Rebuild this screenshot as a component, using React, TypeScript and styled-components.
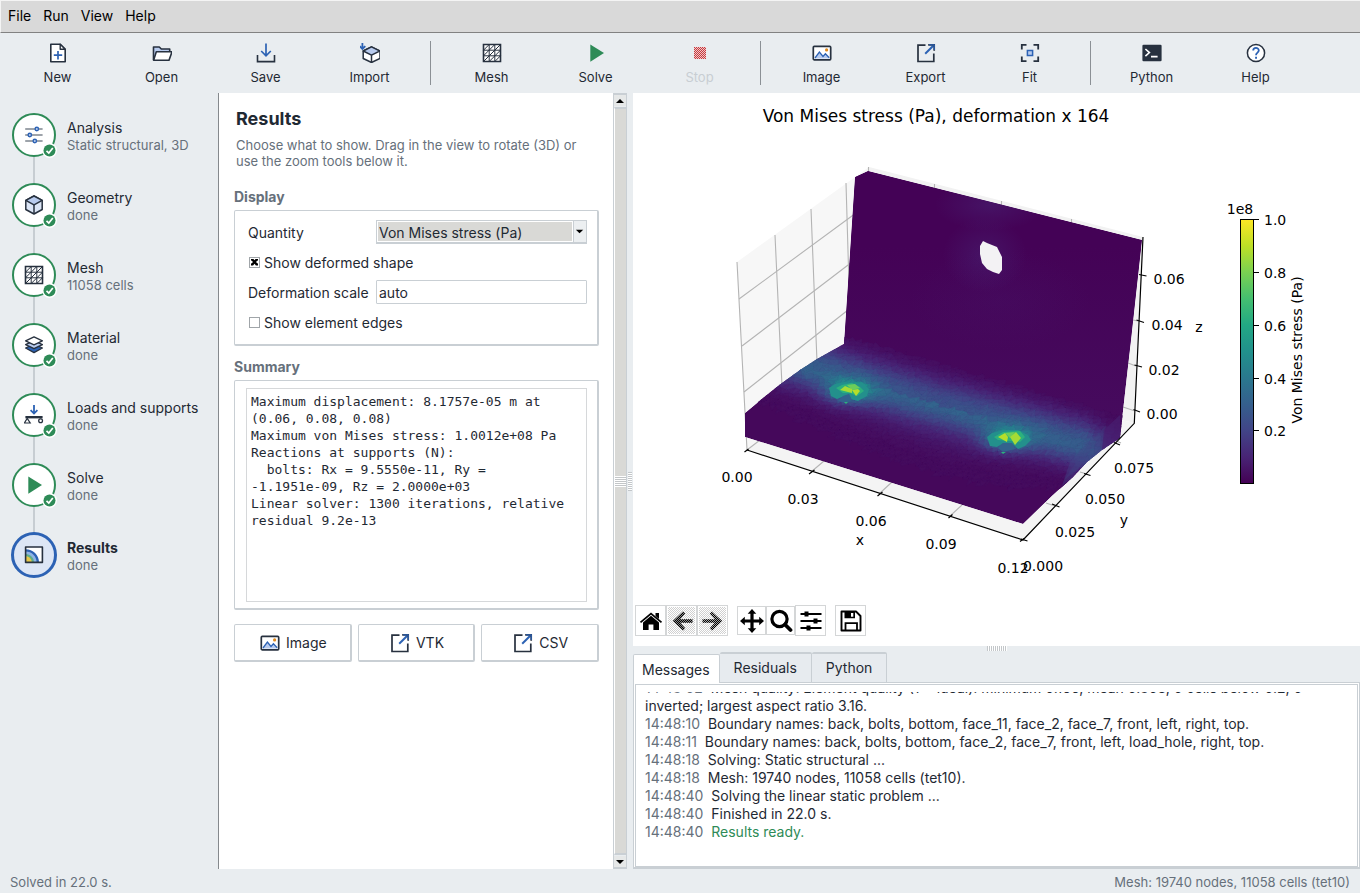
import React from 'react';
import styled, { createGlobalStyle } from 'styled-components';

const ink = '#1f2933';
const navy = '#27313f';
const muted = '#66707b';
const blue = '#2c62b4';
const paleBlue = '#b8cbee';
const green = '#2e8b57';
const line = '#c9cfd4';
const canvas = '#e9edf0';

const GlobalStyle = createGlobalStyle`
  *, *::before, *::after { box-sizing: border-box; }
  body {
    margin: 0;
    background: ${canvas};
    color: ${ink};
    font-family: Inter, "Liberation Sans", sans-serif;
    font-size: 14px;
  }
  button, input, select, textarea { font: inherit; color: inherit; margin: 0; }
`;

const Page = styled.div`
  display: flex;
  flex-direction: column;
  min-height: 100vh;
`;

/* ---------- menu bar and tool bar ---------- */

const MenuBar = styled.nav`
  display: flex;
  gap: 12px;
  height: 33px;
  padding: 0 7px;
  background: #d9d9d9;
  border-top: 1px solid #f4f4f4;
  border-left: 1px solid #f4f4f4;
  border-bottom: 1px solid #828282;
`;

const MenuItem = styled.button`
  border: 0;
  padding: 0 0 2px;
  background: none;
  color: #000;
  line-height: 28px;
`;

const ToolBar = styled.div`
  display: flex;
  height: 60px;
  padding: 0 6px;
`;

const ToolButton = styled.button`
  display: flex;
  flex-direction: column;
  align-items: center;
  gap: 5px;
  width: 104px;
  padding: 10px 1px 0 0;
  border: 0;
  background: none;
  font-size: 13px;
  line-height: 18px;
  &:disabled { color: #c8ced3; }
`;

const ToolDivider = styled.div`
  width: 1px;
  height: 44px;
  margin: 8px 9px 0 8px;
  background: #8b9095;
`;

const IconSvg = styled.svg`
  display: block;
  flex: none;
  width: 20px;
  height: 20px;
  fill: none;
`;

/* ---------- work area ---------- */

const Work = styled.main`
  display: flex;
  flex: 1;
  min-height: 0;
`;

const Sidebar = styled.ol`
  flex: none;
  width: 219px;
  margin: 0;
  padding: 7px 0 0 12px;
  border-right: 1px solid #85898d;
  list-style: none;
`;

const Step = styled.li`
  display: flex;
  gap: 11px;
  height: 70px;
`;

const Marker = styled.div`
  display: flex;
  flex-direction: column;
  align-items: center;
  width: 44px;
`;

const Link = styled.div<{ $hidden?: boolean }>`
  flex: 1;
  width: 2px;
  background: ${(p) => (p.$hidden ? 'transparent' : '#c7cdd2')};
`;

const Disc = styled.button<{ $active?: boolean }>`
  position: relative;
  display: flex;
  flex: none;
  align-items: center;
  justify-content: center;
  width: ${(p) => (p.$active ? 46 : 44)}px;
  height: ${(p) => (p.$active ? 46 : 44)}px;
  padding: 0;
  border: ${(p) => (p.$active ? `3px solid ${blue}` : `2px solid ${green}`)};
  border-radius: 50%;
  background: ${(p) => (p.$active ? '#dde6f5' : '#fff')};
`;

const Badge = styled.svg`
  position: absolute;
  right: -3px;
  bottom: -3px;
  width: 15px;
  height: 15px;
`;

const StepText = styled.div`
  display: flex;
  flex-direction: column;
  justify-content: center;
  padding-top: 3px;
`;

const StepTitle = styled.span<{ $active?: boolean }>`
  line-height: 18px;
  font-weight: ${(p) => (p.$active ? 700 : 400)};
`;

const StepNote = styled.span`
  color: ${muted};
  font-size: 13px;
  line-height: 17px;
`;

/* ---------- results form ---------- */

const Panel = styled.section`
  flex: none;
  display: flex;
  flex-direction: column;
  width: 394px;
  padding: 15px 14px 15px 15px;
  background: #fff;
`;

const PanelTitle = styled.h1`
  margin: 0 2px;
  font-size: 18px;
  font-weight: 700;
  line-height: 22px;
`;

const PanelHint = styled.p`
  margin: 7px 14px 0 2px;
  color: ${muted};
  font-size: 13px;
  line-height: 16px;
`;

const GroupTitle = styled.h2<{ $top: number }>`
  margin: ${(p) => p.$top}px 0 4px;
  color: ${muted};
  font-size: 14px;
  font-weight: 700;
  line-height: 18px;
`;

const Frame = styled.div`
  border: 1px solid ${line};
  border-right-width: 2px;
  border-bottom-width: 2px;
  border-radius: 2px;
`;

const Fields = styled(Frame)`
  padding: 6px 10px 7px 13px;
`;

const FieldRow = styled.div`
  display: grid;
  grid-template-columns: 128px 1fr;
  align-items: center;
  height: 30px;
`;

const CheckRow = styled.label`
  display: flex;
  align-items: center;
  gap: 4px;
  height: 30px;
  padding-left: 1px;
`;

const SelectBox = styled.div`
  position: relative;
  display: flex;
  height: 24px;
  border: 1px solid ${line};
  border-bottom-width: 2px;
`;

const Select = styled.select`
  appearance: none;
  flex: 1;
  padding: 2px 15px 0 1px;
  border: 1px solid #fff;
  border-radius: 0;
  background: linear-gradient(90deg, #d9d9d6 calc(100% - 13px), #fff calc(100% - 13px));
`;

const SelectArrow = styled.svg`
  position: absolute;
  right: 0;
  top: 0;
  width: 13px;
  height: 21px;
  background: #eceff1;
  border-left: 1px solid ${line};
  pointer-events: none;
`;

const TextInput = styled.input`
  width: 100%;
  height: 24px;
  padding: 0 2px;
  border: 1px solid ${line};
  border-radius: 1px;
  background: #fff;
`;

const Check = styled.input`
  appearance: none;
  width: 11px;
  height: 11px;
  border: 1px solid #a0a5a9;
  background: #fff;
  &:checked::before {
    content: '';
    display: block;
    width: 7px;
    height: 7px;
    margin: 1px;
    background: #000;
    clip-path: polygon(0 0, 30% 0, 50% 25%, 70% 0, 100% 0, 100% 25%, 70% 50%, 100% 75%, 100% 100%, 70% 100%, 50% 75%, 30% 100%, 0 100%, 0 75%, 30% 50%, 0 25%);
  }
`;

const SummaryFrame = styled(Frame)`
  height: 230px;
  padding: 7px 10px 6px 11px;
`;

const SummaryText = styled.textarea`
  display: block;
  width: 100%;
  height: 214px;
  padding: 4px;
  border: 1px solid #d6d8da;
  background: #fff;
  font-family: "DejaVu Sans Mono", monospace;
  font-size: 13px;
  line-height: 17px;
  resize: none;
  overflow: hidden;
`;

const Exports = styled.div`
  display: grid;
  grid-template-columns: 1fr 1fr 1fr;
  gap: 6px;
  margin-top: 14px;
`;

const ExportButton = styled.button`
  display: flex;
  align-items: center;
  justify-content: center;
  gap: 6px;
  height: 38px;
  padding: 0 0 0 2px;
  border: 1px solid ${line};
  border-right-width: 2px;
  border-bottom-width: 2px;
  border-radius: 2px;
  background: #fff;
`;

/* ---------- scroll bar and sashes ---------- */

const ScrollBar = styled.div`
  flex: none;
  display: flex;
  flex-direction: column;
  width: 14px;
  border: 1px solid ${line};
  border-top-width: 2px;
  border-bottom-width: 2px;
`;

const ScrollButton = styled.button`
  display: flex;
  align-items: center;
  justify-content: center;
  height: 11px;
  padding: 0;
  border: 0;
  background: #e6e8e8;
`;

const Thumb = styled.div`
  flex: 1;
  display: flex;
  align-items: center;
  margin: 1px 0;
  border-top: 2px solid ${line};
  border-bottom: 2px solid ${line};
  border-left: 1px solid #fff;
  background: #d9d9d6;
`;

const ThumbGrip = styled.div`
  width: 100%;
  height: 11px;
  background: repeating-linear-gradient(#fff 0 1px, #c3c6c8 1px 2px);
`;

const SashV = styled.div`
  flex: none;
  display: flex;
  align-items: center;
  justify-content: center;
  width: 6px;
`;

const SashGripV = styled.div`
  width: 4px;
  height: 19px;
  background: repeating-linear-gradient(#c3c7ca 0 1px, #fff 1px 2px);
`;

const SashH = styled.div`
  display: flex;
  justify-content: center;
  height: 6px;
`;

const SashGripH = styled.div`
  width: 20px;
  height: 5px;
  background: repeating-linear-gradient(90deg, #c3c7ca 0 1px, #fff 1px 2px);
`;

/* ---------- plot ---------- */

const RightPane = styled.section`
  flex: 1;
  min-width: 0;
  display: flex;
  flex-direction: column;
`;

const Plot = styled.svg`
  flex: 1 1 0;
  width: 100%;
  min-height: 320px;
  background: #fff;
  font-family: "DejaVu Sans", sans-serif;
  font-size: 14px;
`;

const PlotBar = styled.div`
  display: flex;
  align-items: center;
  height: 49px;
  padding: 0 2px 2px;
  background: #fff;
`;

const PlotButton = styled.button<{ $small?: boolean }>`
  display: flex;
  align-items: center;
  justify-content: center;
  width: ${(p) => (p.$small ? 29 : 31)}px;
  height: ${(p) => (p.$small ? 29 : 31)}px;
  padding: 1px;
  border: 1px solid #d4d6d7;
  background: #fff;
  &:disabled {
    background: repeating-conic-gradient(#d0d0d0 0 25%, #fff 0 50%) 0 0 / 2px 2px content-box, #fff;
  }
`;

const PlotGap = styled.div`
  width: 9px;
`;

const PlotIcon = styled.svg`
  display: block;
  flex: none;
  width: 24px;
  height: 24px;
`;

/* ---------- message notebook ---------- */

const Tabs = styled.div`
  display: flex;
  align-items: flex-end;
  height: 31px;
  margin-bottom: -1px;
  padding-right: 1px;
  z-index: 1;
`;

const Tab = styled.button<{ $on?: boolean }>`
  height: ${(p) => (p.$on ? 29 : 30)}px;
  margin-bottom: ${(p) => (p.$on ? 0 : 1)}px;
  padding: ${(p) => (p.$on ? '0 9px 0 8px' : '0 14px 1px')};
  border: 1px solid ${line};
  border-top-width: ${(p) => (p.$on ? 1 : 2)}px;
  border-bottom: 0;
  border-left-width: ${(p) => (p.$on ? 1 : 0)}px;
  border-radius: 2px 2px 0 0;
  background: ${(p) => (p.$on ? '#fff' : '#e7ebef')};
`;

const TabBody = styled.div`
  height: 187px;
  padding: 1px 1px 0;
  border: 1px solid ${line};
  border-bottom-width: 2px;
  background: #fff;
`;

const LogFrame = styled.div`
  height: 183px;
  padding: 7px 9px;
  border: 1px solid ${line};
`;

const Log = styled.div`
  display: flex;
  flex-direction: column;
  justify-content: flex-end;
  height: 100%;
  padding-bottom: 18px;
  overflow: hidden;
`;

const LogLine = styled.p<{ $ok?: boolean }>`
  margin: 0;
  line-height: 18px;
  white-space: pre-wrap;
  color: ${(p) => (p.$ok ? green : ink)};
`;

const LogTime = styled.span`
  color: ${muted};
`;

const StatusBar = styled.footer`
  display: flex;
  justify-content: space-between;
  height: 24px;
  padding: 0 10px;
  color: ${muted};
  font-size: 13px;
  line-height: 26px;
`;

/* ---------- icons ---------- */

const Icon = ({ children }: { children: React.ReactNode }) => (
  <IconSvg viewBox="0 0 20 20" aria-hidden="true">{children}</IconSvg>
);

const icons: Record<string, React.ReactNode> = {
  file: (
    <Icon>
      <path d="M2.8 1.3h9.4l5 5v12.5H2.8z" fill="#fff" stroke={navy} strokeWidth="1.6" strokeLinejoin="round" />
      <path d="M12.2 1.3v5h5z" fill="#fff" stroke={navy} strokeWidth="1.4" strokeLinejoin="round" />
      <path d="M10 8v8.4M5.8 12.2h8.4" stroke={blue} strokeWidth="1.7" />
    </Icon>
  ),
  folder: (
    <Icon>
      <path d="M1.5 17V4h5.8l2 2h8.4v3" fill={paleBlue} stroke={navy} strokeWidth="1.6" strokeLinejoin="round" />
      <path d="M4.3 8.8H20l-3 8.4H1.6z" fill="#fff" stroke={navy} strokeWidth="1.6" strokeLinejoin="round" />
    </Icon>
  ),
  save: (
    <Icon>
      <path d="M10 .5v12.2M5.2 8l4.8 4.8L14.8 8" stroke={blue} strokeWidth="1.7" />
      <path d="M1.5 12v6.6h17V12" stroke={navy} strokeWidth="1.6" />
    </Icon>
  ),
  import: (
    <Icon>
      <path d="M11.5 3.8 20 8v7.5l-8.5 4-8.3-4V8z" fill="#fff" stroke={navy} strokeWidth="1.5" strokeLinejoin="round" />
      <path d="M11.5 3.8 20 8l-8.5 4.2L3.2 8z" fill={paleBlue} stroke={navy} strokeWidth="1.5" strokeLinejoin="round" />
      <path d="M11.5 12.2v7" stroke={navy} strokeWidth="1.5" />
      <path d="M2.4-.2v6M-.4 3.2 2.4 6l2.9-2.8" stroke={blue} strokeWidth="1.8" />
    </Icon>
  ),
  mesh: (
    <Icon>
      <path d="M1.5 1.5h17v17h-17z" fill="#fff" stroke={navy} strokeWidth="1.6" />
      <path d="M7.2 1.5v17M12.8 1.5v17M1.5 7.2h17M1.5 12.8h17M1.5 7.2l5.7-5.7M1.5 12.8 12.8 1.5M1.5 18.5l17-17M7.2 18.5 18.5 7.2M12.8 18.5l5.7-5.7" stroke={navy} strokeWidth="1" />
    </Icon>
  ),
  play: <Icon><path d="M4.3 1.5 18 10 4.3 18.7z" fill={green} /></Icon>,
  stop: (
    <Icon>
      <path d="M4 4h12v12H4z" fill="#efc9ca" />
      {Array.from({ length: 12 }, (_, r) => (
        <path key={r} d={`M${4 + (r % 2)} ${4.5 + r}H16`} stroke="#c8393e" strokeWidth="1" strokeDasharray="1 1" shapeRendering="crispEdges" />
      ))}
    </Icon>
  ),
  image: (
    <Icon>
      <rect x="1.3" y="3.4" width="17.4" height="13.4" rx="1" fill="#fff" stroke={navy} strokeWidth="1.7" />
      <path d="M3 15.6 7.4 9.4l3.4 4.2 2.6-2.8 3.8 4.8z" fill={paleBlue} />
      <path d="M3 15 7.4 9l3.6 4.4 2.4-2.6 3.8 4" stroke={blue} strokeWidth="1.3" />
      <circle cx="14.6" cy="6.9" r="1.6" fill="#e08a1e" />
    </Icon>
  ),
  export: (
    <Icon>
      <path d="M9.5 2.2H2v16.3h15.8v-8" stroke={navy} strokeWidth="1.7" />
      <path d="M9.2 10.8 18 2" stroke={blue} strokeWidth="2" />
      <path d="M12.2 1.8h6v6" stroke={navy} strokeWidth="1.7" />
      <path d="M13 1.8h5.2V7" stroke={blue} strokeWidth="1.2" />
    </Icon>
  ),
  fit: (
    <Icon>
      <path d="M1.8 6.5V1.8h4.7M13.5 1.8h4.7v4.7M18.2 13.5v4.7h-4.7M6.5 18.2H1.8v-4.7" stroke={navy} strokeWidth="1.8" />
      <path d="M7.4 7.4h5.2v5.2H7.4z" fill={paleBlue} stroke={blue} strokeWidth="1.5" />
    </Icon>
  ),
  terminal: (
    <Icon>
      <rect x=".4" y="1.8" width="19.2" height="16.4" rx="1.2" fill={navy} />
      <path d="M3.4 6l4 3.6-4 3.6M9 13.6h6.6" stroke="#fff" strokeWidth="1.6" />
    </Icon>
  ),
  help: (
    <Icon>
      <circle cx="10" cy="10" r="8.6" fill="#fff" stroke={navy} strokeWidth="1.5" />
      <path d="M7.2 7.6c0-3.6 5.6-3.6 5.6 0 0 2-2.8 2.1-2.8 4.6" stroke={blue} strokeWidth="1.8" />
      <path d="M9.1 13.8h1.9v1.9H9.1z" fill={blue} />
    </Icon>
  ),
  sliders: (
    <Icon>
      <path d="M1.2 4h17.4M1.2 10h17.4M1.2 16h17.4" stroke="#7d858e" strokeWidth="1.5" />
      <g fill="#b8cbee" stroke={blue} strokeWidth="1.4">
        <circle cx="12.8" cy="4" r="1.7" />
        <circle cx="5.8" cy="10" r="1.7" />
        <circle cx="10.8" cy="16" r="1.7" />
      </g>
    </Icon>
  ),
  cube: (
    <Icon>
      <path d="M10 1 18.2 5.3v9.2L10 19l-8.2-4.5V5.3z" fill="#dbe5f6" stroke={navy} strokeWidth="1.5" strokeLinejoin="round" />
      <path d="M10 1 18.2 5.3 10 9.8 1.8 5.3z" fill={paleBlue} stroke={navy} strokeWidth="1.5" strokeLinejoin="round" />
      <path d="M10 9.8V19" stroke={navy} strokeWidth="1.5" />
    </Icon>
  ),
  layers: (
    <Icon>
      <g stroke={navy} strokeWidth="1.3" strokeLinejoin="round">
        <path d="M10 9.2 18.4 13 10 17.6 1.6 13z" fill={blue} />
        <path d="M10 5.6 18.4 9.6 10 13.6 1.6 9.6z" fill={paleBlue} />
        <path d="M10 1.8 18.4 5.8 10 9.8 1.6 5.8z" fill="#fff" />
      </g>
    </Icon>
  ),
  loads: (
    <Icon>
      <path d="M10-.6V8M6.6 5.2 10 8.6l3.4-3.4" stroke={blue} strokeWidth="1.8" />
      <path d="M1.4 11h17.2v2.4H1.4z" fill={navy} />
      <path d="M3.2 13.4.4 18h5.8z" fill="#fff" stroke={navy} strokeWidth="1.2" />
      <circle cx="16.6" cy="15.8" r="1.9" fill="#fff" stroke={navy} strokeWidth="1.3" />
    </Icon>
  ),
  contour: (
    <Icon>
      <path d="M1.6 2h16.8v15.4H1.6z" fill="#fff" />
      <path d="M1.6 4.2C9 4.2 15 10 15 17.4H1.6z" fill={blue} />
      <path d="M1.6 6.4c6.2 0 11 4.9 11 11h-11z" fill="#8fb4e6" />
      <path d="M1.6 9c4.7 0 8.4 3.7 8.4 8.4H1.6z" fill="#5fae8c" />
      <path d="M1.6 11.2c3.5 0 6.2 2.7 6.2 6.2H1.6z" fill="#e6c84a" />
      <path d="M1.6 2h16.8v15.4H1.6z" stroke={navy} strokeWidth="1.6" strokeLinejoin="round" />
    </Icon>
  ),
};

/* ---------- data ---------- */

type Tool = { label: string; icon: string; off?: boolean };

const toolGroups: Tool[][] = [
  [{ label: 'New', icon: 'file' }, { label: 'Open', icon: 'folder' }, { label: 'Save', icon: 'save' }, { label: 'Import', icon: 'import' }],
  [{ label: 'Mesh', icon: 'mesh' }, { label: 'Solve', icon: 'play' }, { label: 'Stop', icon: 'stop', off: true }],
  [{ label: 'Image', icon: 'image' }, { label: 'Export', icon: 'export' }, { label: 'Fit', icon: 'fit' }],
  [{ label: 'Python', icon: 'terminal' }, { label: 'Help', icon: 'help' }],
];

const steps = [
  { title: 'Analysis', note: 'Static structural, 3D', icon: 'sliders' },
  { title: 'Geometry', note: 'done', icon: 'cube' },
  { title: 'Mesh', note: '11058 cells', icon: 'mesh' },
  { title: 'Material', note: 'done', icon: 'layers' },
  { title: 'Loads and supports', note: 'done', icon: 'loads' },
  { title: 'Solve', note: 'done', icon: 'play' },
  { title: 'Results', note: 'done', icon: 'contour', active: true },
];

const summary = `Maximum displacement: 8.1757e-05 m at (0.06, 0.08, 0.08)
Maximum von Mises stress: 1.0012e+08 Pa
Reactions at supports (N):
  bolts: Rx = 9.5550e-11, Ry =
-1.1951e-09, Rz = 2.0000e+03
Linear solver: 1300 iterations, relative residual 9.2e-13`;

const log = [
  { time: '14:48:02', text: 'Mesh quality: Element quality (1 = ideal): minimum 0.166, mean 0.803, 0 cells below 0.2, 0 inverted; largest aspect ratio 3.16.' },
  { time: '14:48:10', text: 'Boundary names: back, bolts, bottom, face_11, face_2, face_7, front, left, right, top.' },
  { time: '14:48:11', text: 'Boundary names: back, bolts, bottom, face_2, face_7, front, left, load_hole, right, top.' },
  { time: '14:48:18', text: 'Solving: Static structural ...' },
  { time: '14:48:18', text: 'Mesh: 19740 nodes, 11058 cells (tet10).' },
  { time: '14:48:40', text: 'Solving the linear static problem ...' },
  { time: '14:48:40', text: 'Finished in 22.0 s.' },
  { time: '14:48:40', text: 'Results ready.', ok: true },
];

/* ---------- stress plot ---------- */

const viridis = ['#440154', '#482475', '#414487', '#355f8d', '#2a788e', '#21918c', '#22a884', '#44bf70', '#7ad151', '#bddf26', '#fde725'];

const shade = (v: number) => {
  const t = Math.min(0.999, Math.max(0, v)) * 10;
  const i = Math.floor(t);
  const part = (hex: string, k: number) => parseInt(hex.slice(1 + k * 2, 3 + k * 2), 16);
  const mix = [0, 1, 2].map((k) => Math.round(part(viridis[i], k) + (part(viridis[i + 1], k) - part(viridis[i], k)) * (t - i)));
  return `rgb(${mix.join(',')})`;
};

const bell = (d: number, up: number, down: number) => Math.exp(-((d / (d < 0 ? up : down)) ** 2));

/* Stress on the base plate: a band along the fold and a peak at each bolt. */
const stress = (x: number, y: number) => {
  const d = y - (344 + 0.29 * (x - 844));
  if (d < -8) return 0.02;
  const ends = 0.82 + 0.18 * Math.min(1, Math.abs(x - 935) / 110);
  const edge = x > 1085 ? Math.max(0.35, 1 - (x - 1085) / 45) : 1;
  const band = 0.27 * ends * edge * bell(d - 32, 24, 22);
  const tail = d > 34 ? 0.07 * bell(d - 34, 1, 42) * bell(x - 940, 140, 90) : 0;
  const bolt = (cx: number, cy: number) => 0.28 * Math.exp(-(((x - cx) / 23) ** 2) - ((y - cy) / 12) ** 2);
  return 0.02 + band + tail + bolt(850, 391) + bolt(1007, 439);
};

const buildFacets = () => {
  let seed = 7;
  const rand = () => {
    seed = (seed * 16807) % 2147483647;
    return seed / 2147483647;
  };
  const cols = 70;
  const rows = 52;
  const points: number[][][] = [];
  for (let r = 0; r <= rows; r += 1) {
    points.push([]);
    for (let c = 0; c <= cols; c += 1) {
      points[r].push([740 + c * 6 + (rand() - 0.5) * 5, 325 + c * 0.3 + r * 3.8 + (rand() - 0.5) * 3]);
    }
  }
  const levels = new Map<number, string>();
  const add = (tri: number[][]) => {
    const x = (tri[0][0] + tri[1][0] + tri[2][0]) / 3;
    const y = (tri[0][1] + tri[1][1] + tri[2][1]) / 3;
    const level = Math.round(stress(x, y) * (0.96 + rand() * 0.08) * 100);
    if (level < 3) return;
    const d = `M${tri.map((p) => p.map((n) => n.toFixed(1)).join(' ')).join('L')}z`;
    levels.set(level, (levels.get(level) ?? '') + d);
  };
  for (let r = 0; r < rows; r += 1) {
    for (let c = 0; c < cols; c += 1) {
      const [a, b] = [points[r][c], points[r][c + 1]];
      const [e, f] = [points[r + 1][c], points[r + 1][c + 1]];
      add([a, b, e]);
      add([b, f, e]);
    }
  }
  return [...levels.entries()].sort((p, q) => p[0] - q[0]);
};

const facets = buildFacets();

const outline = '855,177 868,171 1142,240 1131,340 1120,438 1102,450 1087,462 1073,477 1053,495 1023,524 745,437 745,413 763,398 782,383 800,370 817,359 844,344';

const tickLabels: [string, number, number][] = [
  ['0.00', 737, 482], ['0.03', 803, 504], ['0.06', 871, 526], ['0.09', 941, 549], ['0.12', 1013, 573],
  ['0.000', 1043, 571], ['0.025', 1075, 537], ['0.050', 1105, 504], ['0.075', 1134, 473],
  ['0.00', 1162, 419], ['0.02', 1164, 375], ['0.04', 1167, 330], ['0.06', 1169, 284],
  ['x', 860, 545], ['y', 1124, 525], ['z', 1199, 332],
];

const barTicks: [string, number][] = [['1.0', 219.5], ['0.8', 272.5], ['0.6', 325.5], ['0.4', 378.5], ['0.2', 430.5]];

const StressPlot = () => (
  <Plot viewBox="633 93 727 504" role="img" aria-label="Von Mises stress on the deformed bracket">
    <defs>
      <clipPath id="body"><polygon points={outline} /></clipPath>
      <linearGradient id="scale" x1="0" y1="1" x2="0" y2="0">
        {viridis.map((c, i) => <stop key={c} offset={i / 10} stopColor={c} />)}
      </linearGradient>
      <radialGradient id="glow">
        <stop offset="0" stopColor="#482475" stopOpacity=".5" />
        <stop offset="1" stopColor="#482475" stopOpacity="0" />
      </radialGradient>
      <linearGradient id="wall" x1="0" y1="0" x2="0" y2="1">
        <stop offset=".3" stopColor="#440256" />
        <stop offset="1" stopColor="#460b5e" />
      </linearGradient>
    </defs>

    <text x="936" y="122" textAnchor="middle" fontSize="17">Von Mises stress (Pa), deformation x 164</text>

    <polygon points="737,262 869,167 869,360 747,450" fill="#f7f7f7" />
    <polygon points="869,167 1143,237 1134,423 869,360" fill="#f2f2f2" />
    <polygon points="747,450 869,360 1134,423 1023,540" fill="#f4f4f4" />
    <g stroke="#b4b4b4" strokeWidth="1.1">
      <path d="M737 262 747 450M775 235 782 386M811 209 817 362M846 183 849 285" />
      <path d="M739 299 856 213M742 346 852 262M744 392 848 310M747 450 760 440" />
      <path d="M811 472 824 461M879 494 892 482M950 516 962 505" />
      <path d="M868.5 167v5M934.5 184v5M1001.5 201v5M1071.5 219v5" />
      <path d="M1046 503 1055 506M1080 472 1087 474M1123 407 1135 411M1128 363 1136 366M1133 320 1138 321M1114 440 1121 443" />
    </g>

    <g clipPath="url(#body)">
      <polygon points={outline} fill={shade(0.02)} />
      <polygon points="855,177 868,171 1142,240 1131,340 1120,424 844,344" fill="url(#wall)" />
      <ellipse cx="985" cy="255" rx="42" ry="38" fill="url(#glow)" />
      <ellipse cx="990" cy="205" rx="55" ry="26" fill="url(#glow)" />
      <ellipse cx="1000" cy="300" rx="90" ry="50" fill="url(#glow)" opacity=".3" />
      {facets.map(([level, d]) => (
        <path key={level} d={d} fill={shade(level / 100)} stroke={shade(level / 100)} strokeWidth=".6" />
      ))}
      <polygon points="1064,480 1086,448 1106,425 1102,450 1087,462" fill="#3a4a86" opacity=".3" />
      <polygon points="1102,450 1104,430 1120,415 1120,438" fill="#472070" opacity=".7" />
      <polygon points="1073,477 1062,486 1070,462 1090,440 1092,448" fill="#404588" opacity=".4" />
    </g>
    <polygon points="983,241 987,243 997,247 1002,257 1002,270 999,274 993,272 987,269 982,263 980,254 980,246" fill="#f3f2f4" />

    <g>
      <polygon points="829,388 835,384 844,382 855,383 862,382 869,389 867,396 858,401 851,399 849,394 844,396 837,399 831,396" fill="#23908c" />
      <polygon points="836,388 842,385 852,383 860,387 864,391 857,396 850,393 843,393" fill="#2cb17e" />
      <polygon points="847,385 855,384 860,388 852,390" fill="#6ccd5a" />
      <polygon points="840,390 845,386 852,389 852,393" fill="#a5db36" />
      <polygon points="852,390 858,389 860,391 856,396" fill="#b5de2b" />
      <polygon points="843,396 849,394 852,400 846,403 838,401" fill="#33628d" />
      <polygon points="844,402 848,402 846,404" fill="#2cb17e" />

      <polygon points="987,437 992,433 1003,430 1018,430 1028,435 1031,440 1025,446 1018,449 1012,443 1003,443 997,447 990,446" fill="#23908c" />
      <polygon points="994,437 1003,432 1020,431 1025,437 1020,442 1010,441 998,440" fill="#2cb17e" />
      <polygon points="1005,433 1015,432 1010,438" fill="#6ccd5a" />
      <polygon points="998,437 1005,433 1008,437 1007,442" fill="#b5de2b" />
      <polygon points="1010,437 1016,432 1021,438 1015,445" fill="#a5db36" />
      <polygon points="1003,443 1012,443 1015,449 1003,452 998,448" fill="#33628d" />
      <polygon points="1001,452 1006,452 1003,454" fill="#2cb17e" />
    </g>

    <g stroke="#000" strokeWidth="1.2" fill="none">
      <path d="M747 450 1023 540 1134.3 423.3 1143 237" />
      <path d="M744.5 452 748.5 449M809 474 814.5 470M877.5 496 882.5 492M948.5 518 952.5 514.5M1020 541.5 1024 538.5" />
      <path d="M1021 539 1027.5 541M1052 504 1059.5 507M1084 473.5 1090.5 475.5M1114 442.5 1120 445" />
      <path d="M1133.5 409.5 1140 412M1134.5 365 1142 367M1136.5 320 1144 322.5M1139 274.5 1146.5 276" />
    </g>

    {tickLabels.map(([label, x, y]) => (
      <text key={`${label}-${x}`} x={x} y={y} textAnchor="middle">{label}</text>
    ))}

    <rect x="1240.5" y="219.5" width="13" height="264" fill="url(#scale)" stroke="#000" />
    <text x="1240" y="214" textAnchor="middle">1e8</text>
    {barTicks.map(([label, y]) => (
      <g key={label}>
        <path d={`M1254 ${y}h5`} stroke="#000" />
        <text x="1264" y={y + 5}>{label}</text>
      </g>
    ))}
    <text transform="translate(1302 350) rotate(-90)" textAnchor="middle">Von Mises stress (Pa)</text>
  </Plot>
);

/* ---------- plot navigation ---------- */

const arrowShape = 'M13 2.5 15.2 4.7 10.2 10.2H22.5v3.6H10.2L15.2 19.3 13 21.5 2.8 12z';

const PlotTools = () => (
  <PlotBar>
    <PlotButton aria-label="Home">
      <PlotIcon viewBox="0 0 24 24">
        <path d="M12 6.8 20 13.5V21h-5.6v-5.4H9.6V21H4v-7.5z" />
        <path d="M1.5 13.4 12 4.6l10.5 8.8" fill="none" stroke="#000" strokeWidth="1.8" />
        <path d="M16.5 4H20v6l-3.5-3z" />
      </PlotIcon>
    </PlotButton>
    <PlotButton aria-label="Back" disabled>
      <PlotIcon viewBox="0 0 24 24">
        <defs>
          <pattern id="dots" width="2" height="2" patternUnits="userSpaceOnUse">
            <path d="M0 0h1v1H0zM1 1h1v1H1z" fill="#000" />
          </pattern>
        </defs>
        <path d={arrowShape} fill="url(#dots)" />
        <path d={arrowShape} fill="#000" opacity=".35" />
      </PlotIcon>
    </PlotButton>
    <PlotButton aria-label="Forward" disabled>
      <PlotIcon viewBox="0 0 24 24">
        <g transform="matrix(-1 0 0 1 24 0)">
          <path d={arrowShape} fill="url(#dots)" />
          <path d={arrowShape} fill="#000" opacity=".35" />
        </g>
      </PlotIcon>
    </PlotButton>
    <PlotGap />
    <PlotButton aria-label="Pan" $small>
      <PlotIcon viewBox="0 0 24 24">
        <path d="M12 0l4.3 4.8h-2.7v5.6h5.6V7.7L24 12l-4.8 4.3v-2.7h-5.6v5.6h2.7L12 24l-4.3-4.8h2.7v-5.6H4.8v2.7L0 12l4.8-4.3v2.7h5.6V4.8H7.7z" />
      </PlotIcon>
    </PlotButton>
    <PlotButton aria-label="Zoom" $small>
      <PlotIcon viewBox="0 0 24 24" fill="none" stroke="#000">
        <circle cx="10.5" cy="10" r="7.6" strokeWidth="3.2" />
        <path d="M16 15.5 21.5 21" strokeWidth="3.8" strokeLinecap="round" />
      </PlotIcon>
    </PlotButton>
    <PlotButton aria-label="Configure subplots">
      <PlotIcon viewBox="0 0 24 24">
        <path d="M1.5 5h21M1.5 12h21M1.5 19h21" stroke="#000" strokeWidth="1.8" />
        <path d="M5.5 2.6h4v4.8h-4zM14.5 9.6h4v4.8h-4zM7.5 16.6h4v4.8h-4z" />
      </PlotIcon>
    </PlotButton>
    <PlotGap />
    <PlotButton aria-label="Save figure">
      <PlotIcon viewBox="0 0 24 24">
        <path d="M2.5 2.5H17l4.5 4.5v14.5h-19z" fill="none" stroke="#000" strokeWidth="1.9" strokeLinejoin="round" />
        <path d="M5.5 2.5H16v6.8H5.5zM12 4v3.8h2.3V4z" fillRule="evenodd" />
        <path d="M6.5 21v-6.8H18V21" fill="none" stroke="#000" strokeWidth="1.8" />
      </PlotIcon>
    </PlotButton>
  </PlotBar>
);

const ArrowGlyph = ({ down }: { down?: boolean }) => (
  <svg width="8" height="4" viewBox="0 0 8 4" aria-hidden="true">
    <path d={down ? 'M0 0h8L4 4z' : 'M0 4h8L4 0z'} />
  </svg>
);

export default function App() {
  return (
    <Page>
      <GlobalStyle />
      <MenuBar>
        {['File', 'Run', 'View', 'Help'].map((m) => <MenuItem key={m}>{m}</MenuItem>)}
      </MenuBar>
      <ToolBar>
        {toolGroups.map((group, i) => (
          <React.Fragment key={group[0].label}>
            {i > 0 && <ToolDivider />}
            {group.map((t) => (
              <ToolButton key={t.label} disabled={t.off}>
                {icons[t.icon]}
                {t.label}
              </ToolButton>
            ))}
          </React.Fragment>
        ))}
      </ToolBar>
      <Work>
        <Sidebar>
          {steps.map((s, i) => (
            <Step key={s.title}>
              <Marker>
                <Link $hidden={i === 0} />
                <Disc $active={s.active} aria-label={s.title}>
                  {icons[s.icon]}
                  {!s.active && (
                    <Badge viewBox="0 0 15 15" aria-hidden="true">
                      <circle cx="7.5" cy="7.5" r="7.5" fill="#fff" />
                      <circle cx="7.5" cy="7.5" r="6" fill={green} />
                      <path d="M4.5 7.8 6.8 10l4-5" fill="none" stroke="#fff" strokeWidth="1.7" />
                    </Badge>
                  )}
                </Disc>
                <Link $hidden={i === steps.length - 1} />
              </Marker>
              <StepText>
                <StepTitle $active={s.active}>{s.title}</StepTitle>
                <StepNote>{s.note}</StepNote>
              </StepText>
            </Step>
          ))}
        </Sidebar>
        <Panel>
          <PanelTitle>Results</PanelTitle>
          <PanelHint>Choose what to show. Drag in the view to rotate (3D) or use the zoom tools below it.</PanelHint>
          <GroupTitle $top={19}>Display</GroupTitle>
          <Fields>
            <FieldRow>
              <label htmlFor="quantity">Quantity</label>
              <SelectBox>
                <Select id="quantity" defaultValue="vm">
                  <option value="vm">Von Mises stress (Pa)</option>
                </Select>
                <SelectArrow viewBox="0 0 13 21" aria-hidden="true"><path d="M2 8.5h8l-4 4z" /></SelectArrow>
              </SelectBox>
            </FieldRow>
            <CheckRow><Check type="checkbox" defaultChecked />Show deformed shape</CheckRow>
            <FieldRow>
              <label htmlFor="scaleFactor">Deformation scale</label>
              <TextInput id="scaleFactor" type="text" defaultValue="auto" />
            </FieldRow>
            <CheckRow><Check type="checkbox" />Show element edges</CheckRow>
          </Fields>
          <GroupTitle $top={12}>Summary</GroupTitle>
          <SummaryFrame>
            <SummaryText aria-label="Summary" readOnly value={summary} />
          </SummaryFrame>
          <Exports>
            <ExportButton>{icons.image}Image</ExportButton>
            <ExportButton>{icons.export}VTK</ExportButton>
            <ExportButton>{icons.export}CSV</ExportButton>
          </Exports>
        </Panel>
        <ScrollBar>
          <ScrollButton aria-label="Scroll up"><ArrowGlyph /></ScrollButton>
          <Thumb><ThumbGrip /></Thumb>
          <ScrollButton aria-label="Scroll down"><ArrowGlyph down /></ScrollButton>
        </ScrollBar>
        <SashV><SashGripV /></SashV>
        <RightPane>
          <StressPlot />
          <PlotTools />
          <SashH><SashGripH /></SashH>
          <Tabs>
            <Tab $on>Messages</Tab>
            <Tab>Residuals</Tab>
            <Tab>Python</Tab>
          </Tabs>
          <TabBody>
            <LogFrame>
              <Log>
                {log.map((l) => (
                  <LogLine key={l.time + l.text} $ok={l.ok}>
                    <LogTime>{l.time}</LogTime>{'  '}{l.text}
                  </LogLine>
                ))}
              </Log>
            </LogFrame>
          </TabBody>
        </RightPane>
      </Work>
      <StatusBar>
        <span>Solved in 22.0 s.</span>
        <span>Mesh: 19740 nodes, 11058 cells (tet10)</span>
      </StatusBar>
    </Page>
  );
}
